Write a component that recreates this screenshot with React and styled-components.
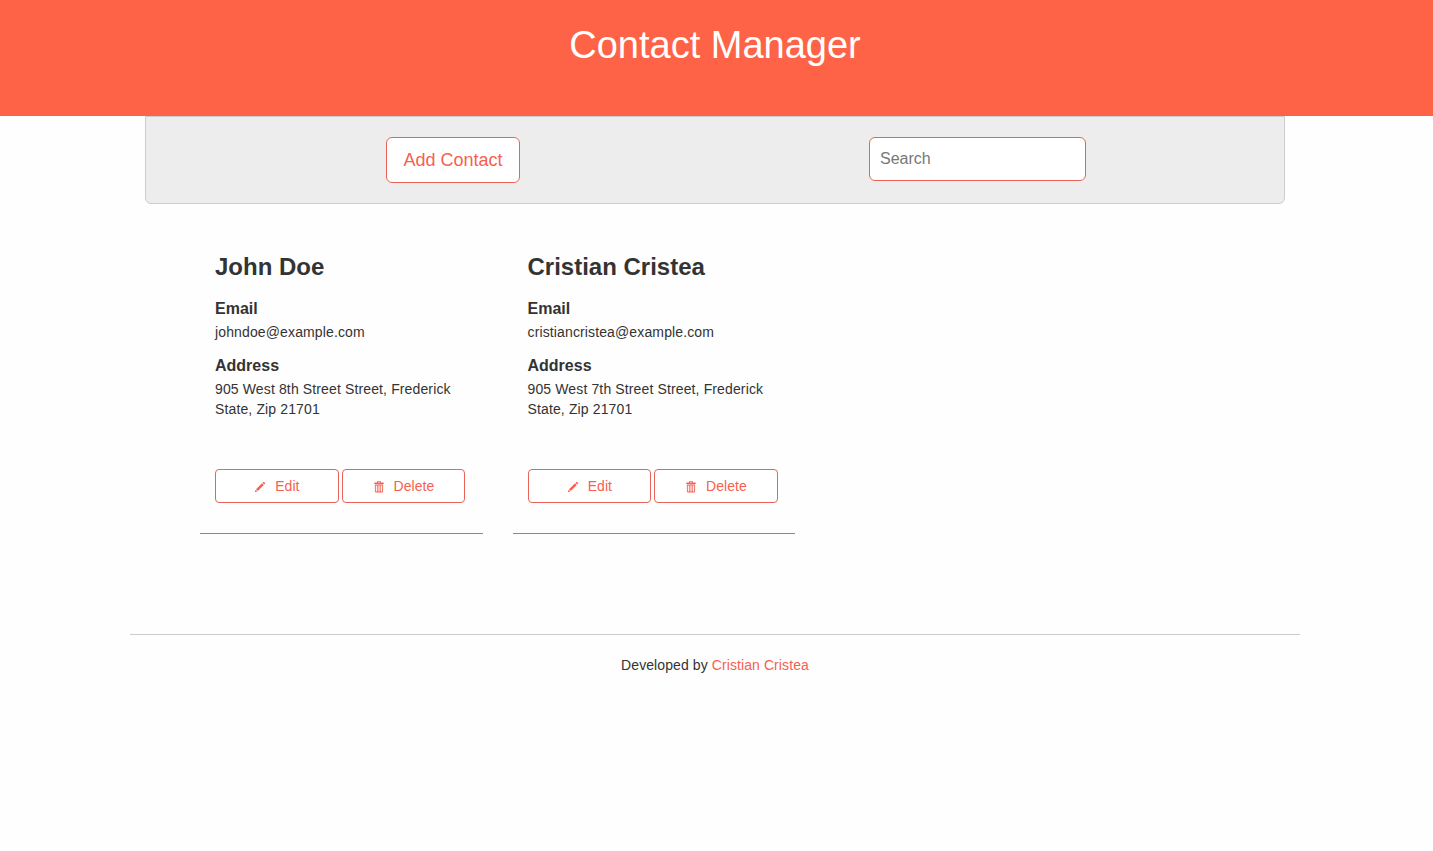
import React from 'react';
import styled, { createGlobalStyle } from 'styled-components';

const accent = '#f75f50';
const line = '#e8645a';

const GlobalStyle = createGlobalStyle`
  * { box-sizing: border-box; }
  body {
    margin: 0;
    background: #fefefe;
    color: #333;
    font: 14px/20px "Liberation Sans", Arial, sans-serif;
  }
`;

const Header = styled.header`
  height: 116px;
  padding: 24px 3px 0 0;
  background: #ff6347;
  text-align: center;
`;

const Title = styled.h1`
  margin: 0;
  color: #fff;
  font-size: 38px;
  font-weight: 400;
  line-height: 42px;
`;

const Container = styled.div`
  width: 1170px;
  margin-left: 130px;
`;

const Toolbar = styled.div`
  display: flex;
  align-items: flex-start;
  gap: 349px;
  height: 88px;
  margin: 0 15px;
  padding: 20px 0 0 240px;
  background: #ededed;
  border: 1px solid #ccc;
  border-radius: 0 0 6px 6px;
`;

const AddButton = styled.button`
  width: 134px;
  height: 46px;
  padding: 0;
  background: #fff;
  border: 1px solid ${line};
  border-radius: 6px;
  color: ${accent};
  font: 18px/24px "Liberation Sans", Arial, sans-serif;
`;

const SearchInput = styled.input`
  width: 217px;
  height: 44px;
  padding: 0 10px;
  background: #fff;
  border: 1px solid ${line};
  border-radius: 6px;
  font: 16px "Liberation Sans", Arial, sans-serif;

  &::placeholder { color: #777; }
`;

const Contacts = styled.main`
  display: flex;
  gap: 30px;
  padding: 50px 0 0 70px;
`;

const Card = styled.article`
  width: 282.5px;
  height: 280px;
  padding: 0 15px;
  border-bottom: 1px solid ${line};
`;

const Name = styled.h2`
  margin: 0 0 19px;
  font-size: 24px;
  line-height: 26px;
`;

const Label = styled.h3`
  margin: 0 0 4px;
  font-size: 16px;
  line-height: 19px;
`;

const Detail = styled.p`
  margin: 0 0 14px;
  letter-spacing: 0.13px;
  white-space: pre-line;
`;

const Actions = styled.div`
  display: flex;
  gap: 2.9px;
  margin-top: 50px;
`;

const ActionButton = styled.button`
  display: flex;
  align-items: center;
  justify-content: center;
  gap: 9px;
  flex: none;
  width: 123.7px;
  height: 34px;
  padding: 0;
  background: #fff;
  border: 1px solid ${line};
  border-radius: 4px;
  color: ${accent};
  font: 14px/20px "Liberation Sans", Arial, sans-serif;
  letter-spacing: 0.05px;
`;

const Icon = styled.svg`
  width: 12px;
  height: 12px;
  margin-top: 2px;
  fill: currentColor;
`;

const Footer = styled.footer`
  margin-top: 100px;
  padding-top: 20px;
  border-top: 1px solid #ccc;
  text-align: center;
  letter-spacing: 0.09px;
`;

const FooterLink = styled.a`
  color: ${accent};
  text-decoration: none;
`;

const PencilIcon = () => (
  <Icon viewBox="0 0 12 12">
    <path d="M.8 11.2 1.6 8.7 3.3 10.4ZM2 8.2 8 2.2 9.8 4 3.8 10ZM8.5 1.7 9.2 1Q9.6.7 10 1L11 2Q11.3 2.4 11 2.8L10.3 3.5Z" />
  </Icon>
);

const TrashIcon = () => (
  <Icon viewBox="0 0 12 12">
    <path
      fillRule="evenodd"
      d="M4 1.6V.8Q4 .2 4.6.2H7.4Q8 .2 8 .8V1.6H10.2Q10.8 1.6 10.8 2.2V3H1.2V2.2Q1.2 1.6 1.8 1.6ZM4.8 1V1.6H7.2V1ZM1.9 3.5H10.1V10.6Q10.1 11.4 9.3 11.4H2.7Q1.9 11.4 1.9 10.6ZM2.8 4.4V10.4H3.9V4.4ZM4.7 4.4V10.4H5.6V4.4ZM6.4 4.4V10.4H7.3V4.4ZM8.1 4.4V10.4H9.2V4.4Z"
    />
  </Icon>
);

const contacts = [
  {
    name: 'John Doe',
    email: 'johndoe@example.com',
    address: '905 West 8th Street Street, Frederick\nState, Zip 21701',
  },
  {
    name: 'Cristian Cristea',
    email: 'cristiancristea@example.com',
    address: '905 West 7th Street Street, Frederick\nState, Zip 21701',
  },
];

export default function App() {
  return (
    <>
      <GlobalStyle />
      <Header>
        <Title>Contact Manager</Title>
      </Header>
      <Container>
        <Toolbar>
          <AddButton>Add Contact</AddButton>
          <SearchInput placeholder="Search" />
        </Toolbar>
        <Contacts>
          {contacts.map((c) => (
            <Card key={c.name}>
              <Name>{c.name}</Name>
              <Label>Email</Label>
              <Detail>{c.email}</Detail>
              <Label>Address</Label>
              <Detail>{c.address}</Detail>
              <Actions>
                <ActionButton><PencilIcon />Edit</ActionButton>
                <ActionButton><TrashIcon />Delete</ActionButton>
              </Actions>
            </Card>
          ))}
        </Contacts>
        <Footer>
          Developed by <FooterLink>Cristian Cristea</FooterLink>
        </Footer>
      </Container>
    </>
  );
}
